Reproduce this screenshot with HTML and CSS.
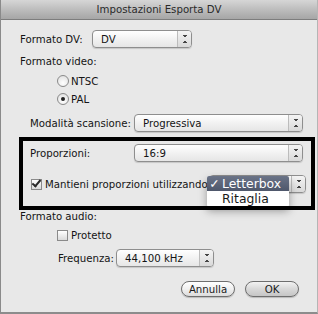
FILE: index.html
```html
<!DOCTYPE html>
<html lang="it">
<head>
    <meta charset="UTF-8">
    <meta name="viewport" content="width=device-width, initial-scale=1.0">
    <title>Impostazioni Esporta DV</title>
    <link rel="stylesheet" href="styles.css">
</head>
<body>
    <div class="window">
        <div class="titlebar">Impostazioni Esporta DV</div>
        <div class="content">
            <div class="row row-dv">
                <span class="label">Formato DV:</span>
                <div class="popup popup-dv"><span class="value">DV</span><span class="arrows"></span></div>
            </div>

            <div class="section">Formato video:</div>
            <div class="radio-row radio-first"><span class="radio"></span>NTSC</div>
            <div class="radio-row"><span class="radio on"></span>PAL</div>

            <div class="row row-scan">
                <span class="label">Modalità scansione:</span>
                <div class="popup popup-wide"><span class="value">Progressiva</span><span class="arrows"></span></div>
            </div>

            <div class="frame">
                <div class="row row-ratio">
                    <span class="label label-ratio">Proporzioni:</span>
                    <div class="popup popup-wide"><span class="value">16:9</span><span class="arrows"></span></div>
                </div>
                <div class="row row-keep">
                    <span class="check on"></span>
                    <span class="label">Mantieni proporzioni utilizzando</span>
                    <div class="popup popup-keep"><span class="value"></span><span class="arrows"></span></div>
                    <div class="menu">
                        <div class="menu-item selected"><span class="tick">✓</span>Letterbox</div>
                        <div class="menu-item"><span class="tick"></span>Ritaglia</div>
                    </div>
                </div>
            </div>

            <div class="section section-audio">Formato audio:</div>
            <div class="check-row"><span class="check"></span>Protetto</div>
            <div class="row row-freq">
                <span class="label">Frequenza:</span>
                <div class="popup popup-freq"><span class="value">44,100 kHz</span><span class="arrows"></span></div>
            </div>

            <div class="buttons">
                <button class="btn">Annulla</button>
                <button class="btn btn-ok">OK</button>
            </div>
        </div>
    </div>
</body>
</html>
```

FILE: styles.css
```css
body {
    margin: 0;
    font-family: "DejaVu Sans", sans-serif;
    font-size: 10.2px;
    color: #141414;
}

.window {
    width: 316px;
    height: 312px;
    background: #e8e8e8;
    border-left: 1px solid #8a8a8a;
    border-right: 1px solid #b5b5b5;
    border-bottom: 2px solid #8c8c8c;
    display: flex;
    flex-direction: column;
}

.titlebar {
    height: 19px;
    line-height: 20px;
    text-align: center;
    color: #2a2a2a;
    background: linear-gradient(#d6d6d6, #b8b8b8 60%, #a6a6a6);
    border-bottom: 1px solid #7d7d7d;
    flex-shrink: 0;
}

.content {
    display: flex;
    flex-direction: column;
    padding-left: 19px;
}

.row {
    display: flex;
    align-items: center;
    height: 18px;
}

.row-dv {
    margin-top: 10px;
}

.row-dv .label {
    width: 72px;
}

.section {
    margin-top: 6px;
    height: 16px;
    line-height: 16px;
}

.radio-row,
.check-row {
    display: flex;
    align-items: center;
    height: 18px;
    padding-left: 37px;
    gap: 2px;
}

.radio-first {
    margin-top: 2px;
}

.radio {
    width: 10px;
    height: 10px;
    border: 1px solid #8a8a8a;
    border-radius: 50%;
    background: radial-gradient(circle at 50% 70%, #ffffff, #dcdcdc);
    display: flex;
    align-items: center;
    justify-content: center;
}

.radio.on::after {
    content: "";
    width: 4px;
    height: 4px;
    border-radius: 50%;
    background: #222;
}

.row-scan {
    margin-top: 6px;
    padding-left: 10px;
}

.row-scan .label {
    width: 104px;
}

.popup {
    height: 16px;
    border: 1px solid #8e8e8e;
    border-radius: 4px;
    background: linear-gradient(#ffffff, #f2f2f2 50%, #e6e6e6);
    box-shadow: 0 1px 1px rgba(0, 0, 0, 0.15);
    display: flex;
    align-items: center;
}

.popup .value {
    flex: 1;
    padding-left: 8px;
}

.arrows {
    width: 13px;
    height: 16px;
    border-left: 1px solid #bcbcbc;
    background:
        linear-gradient(to top right, transparent 50%, #444 50%) 5px 4px / 2px 3px no-repeat,
        linear-gradient(to top left, transparent 50%, #444 50%) 7px 4px / 2px 3px no-repeat,
        linear-gradient(to bottom right, transparent 50%, #444 50%) 5px 9px / 2px 3px no-repeat,
        linear-gradient(to bottom left, transparent 50%, #444 50%) 7px 9px / 2px 3px no-repeat,
        linear-gradient(#f4f4f4, #d9d9d9);
    border-radius: 0 3px 3px 0;
}

.popup-dv {
    width: 98px;
}

.popup-wide {
    width: 167px;
}

.frame {
    position: relative;
    margin-top: 5px;
    margin-left: -1px;
    width: 296px;
    height: 73px;
    box-sizing: border-box;
    padding: 7px 0 0 11px;
}

.frame::after {
    content: "";
    position: absolute;
    inset: 0;
    border: 4px solid #000;
    pointer-events: none;
    z-index: 2;
}

.label-ratio {
    width: 104px;
}

.row-keep {
    position: relative;
    margin-top: 13px;
    padding-left: 1px;
}

.check {
    width: 9px;
    height: 9px;
    border: 1px solid #8a8a8a;
    background: linear-gradient(#ffffff, #dadada);
    margin-right: 3px;
    display: flex;
    align-items: center;
    justify-content: center;
}

.check.on::after {
    content: "";
    width: 3px;
    height: 7px;
    border: solid #2a2a2a;
    border-width: 0 2px 2px 0;
    transform: translate(0, -2px) rotate(40deg);
}

.popup-keep {
    margin-left: auto;
    width: 95px;
    margin-right: 9px;
}

.menu {
    position: absolute;
    left: 177px;
    top: 1px;
    width: 82px;
    background: #fff;
    box-shadow: 0 4px 8px rgba(0, 0, 0, 0.35);
    border-radius: 2px;
    z-index: 1;
    font-size: 12.4px;
}

.menu-item {
    height: 15px;
    line-height: 15px;
    display: flex;
    color: #1a1a1a;
}

.menu-item + .menu-item {
    height: 16px;
    line-height: 16px;
}

.menu-item.selected {
    color: #fff;
    background: linear-gradient(#6a7387, #4e576b);
    border-radius: 2px 2px 0 0;
}

.tick {
    width: 15px;
    text-align: center;
}

.section-audio {
    margin-top: 0;
    height: 14px;
    line-height: 14px;
}

.check-row {
    margin-top: 2px;
    gap: 0;
}

.row-freq {
    margin-top: 5px;
    padding-left: 38px;
}

.row-freq .label {
    width: 58px;
}

.popup-freq {
    width: 96px;
}

.buttons {
    display: flex;
    justify-content: flex-end;
    gap: 10px;
    margin-top: 14px;
    padding-right: 18px;
}

.btn {
    font: inherit;
    color: #1a1a1a;
    height: 16px;
    padding: 0;
    border: 1px solid #6e6e6e;
    border-radius: 8px;
    background: linear-gradient(#ffffff, #f0f0f0 50%, #dcdcdc);
    box-shadow: 0 1px 1px rgba(0, 0, 0, 0.2);
    width: 54px;
}

.btn-ok {
    background: linear-gradient(#f2f2f2, #d8d8d8 50%, #c6c6c6);
}
```
